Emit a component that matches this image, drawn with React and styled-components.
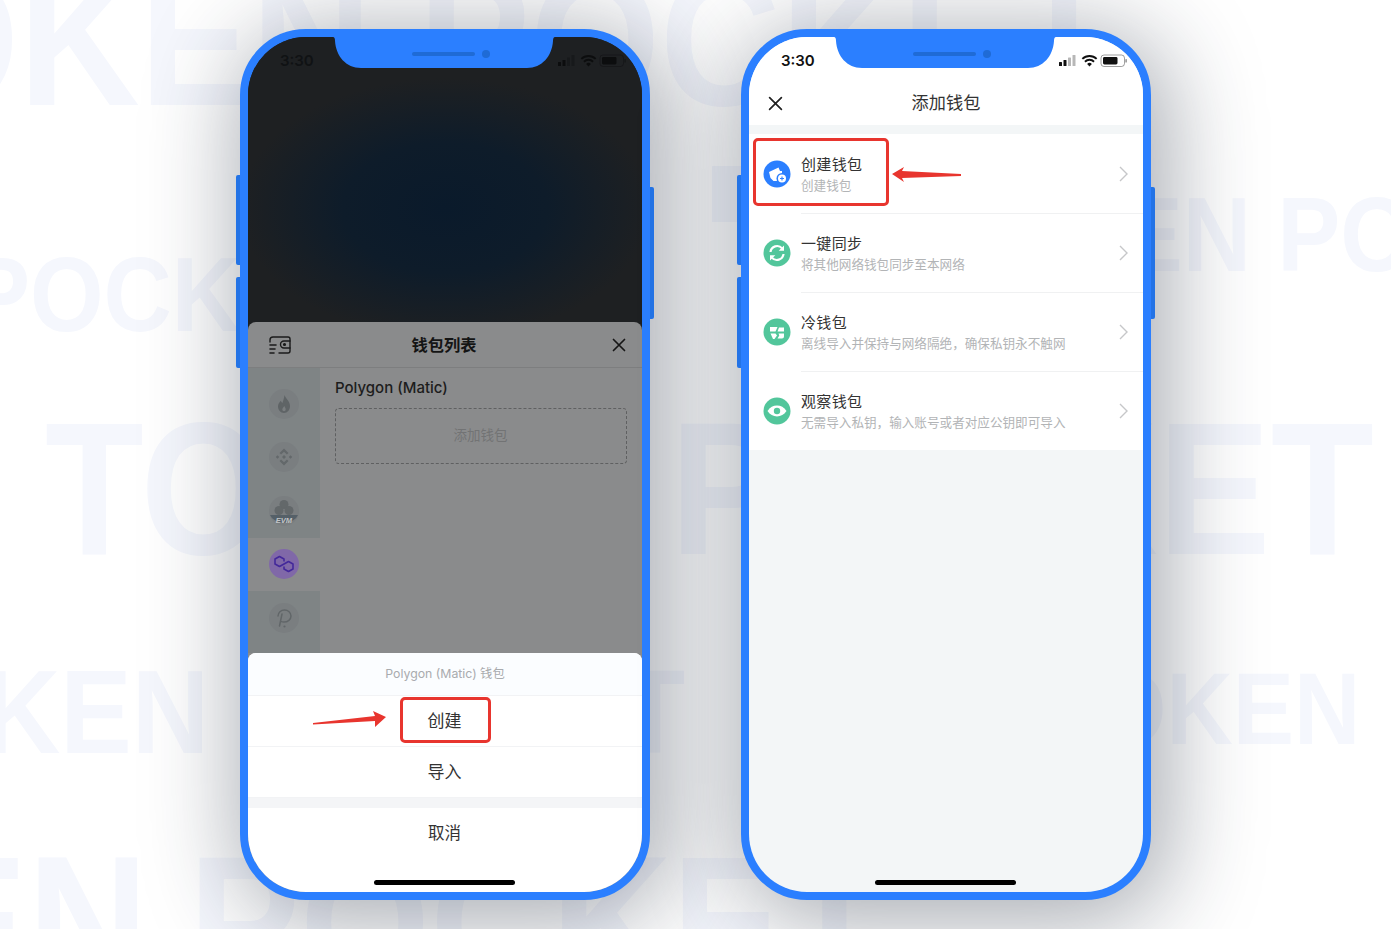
import React from "react";
import styled, { createGlobalStyle } from "styled-components";

const Global = createGlobalStyle`
  html, body { margin: 0; padding: 0; background: #fff; }
  body { font-family: Inter, "Noto Sans CJK SC", sans-serif; }
`;

const Stage = styled.div`
  position: relative; width: 1391px; height: 929px; overflow: hidden; background: #fff;
  display: flex; justify-content: center; align-items: flex-start; gap: 91px; padding-top: 29px; box-sizing: border-box;
`;
const Mark = styled.div`
  position: absolute; top: ${p => p.$top}px; left: ${p => p.$left}px;
  font: 700 ${p => p.$size}px/1 "Liberation Sans", sans-serif; color: #f5f7fd;
  white-space: nowrap; transform: scaleX(${p => p.$sx || 0.9}); transform-origin: 0 0; word-spacing: ${p => p.$ws || 0}px;
`;
const MarkBlock = styled.span`
  position: absolute; left: 712px; top: 166px; width: 40px; height: 56px; background: #f5f7fd;
`;
const Phone = styled.div`
  position: relative; width: 410px; height: 871px; box-sizing: border-box; border: 8px solid #2b7fff; border-radius: 66px;
  background: #2b7fff; box-shadow: 8px 12px 95px 8px rgba(30,40,58,.4); flex: none;
`;
const SideKey = styled.span`
  position: absolute; top: ${p => p.$top}px; height: ${p => p.$h}px; width: 4px; background: #2373e6;
  ${p => p.$right ? "right: -12px; border-radius: 0 2px 2px 0;" : "left: -12px; border-radius: 2px 0 0 2px;"}
`;
const Screen = styled.div`
  position: relative; height: 100%; border-radius: 58px; overflow: hidden; display: flex; flex-direction: column;
  background: ${p => p.$bg};
`;
const NotchWrap = styled.div`
  position: absolute; top: 0; left: 85px; width: 222px; height: 32px; z-index: 3;
`;
const StatusRow = styled.div`
  position: absolute; top: 0; left: 0; right: 0; height: 47px; z-index: 2; display: flex; justify-content: space-between; align-items: center;
  padding: 0 16px 0 32px; color: ${p => p.$c};
`;
const Clock = styled.span`
  font: 600 15px/1 Inter, sans-serif;
`;
const Backdrop = styled.div`
  height: 285px; flex: none;
  background: radial-gradient(ellipse 205px 130px at 50% 60%, #0a1a2b 0%, #0e1c2a 50%, #1e2022 100%);
`;
const WalletSheet = styled.section`
  height: 331px; flex: none; border-radius: 8px 8px 0 0; background: #8a8b8c; display: flex; flex-direction: column;
`;
const SheetHead = styled.header`
  height: 45px; flex: none; box-sizing: content-box; display: grid; grid-template-columns: 1fr auto 1fr; align-items: center; padding: 0 16px 0 14px; border-bottom: 1px solid #7d7e7f;
  & > :first-child { margin-left: 6px; }
  & > :last-child { justify-self: end; }
`;
const SheetTitle = styled.h2`
  margin: 0; font: 700 16.3px/1 "Noto Sans CJK SC", sans-serif; color: #141414;
`;
const SheetBody = styled.div`
  flex: 1; display: flex; min-height: 0;
`;
const Chains = styled.nav`
  width: 72px; background: #7f8485; display: flex; flex-direction: column; flex: none; padding-top: 9px;
`;
const Chain = styled.div`
  height: 53.5px; flex: none; display: flex; align-items: center; justify-content: center;
  background: ${p => p.$on ? "#8a8b8c" : "transparent"};
`;
const WalletPane = styled.div`
  flex: 1; padding: 10px 15px 0; display: flex; flex-direction: column; align-items: stretch;
`;
const PaneLabel = styled.div`
  font: 500 15px/19px Inter, sans-serif; color: #1d1d1d; margin-bottom: 11px;
`;
const AddBox = styled.div`
  height: 52px; border: 1px dashed #5f6061; border-radius: 4px; display: flex; align-items: center; justify-content: center; padding: 0 1px 2px 0;
  font: 400 13.5px/1 "Noto Sans CJK SC", sans-serif; color: #727374;
`;
const ActionSheet = styled.section`
  flex: 1; border-radius: 8px 8px 0 0; overflow: hidden; background: #fff; display: flex; flex-direction: column; position: relative;
`;
const ActionTitle = styled.div`
  height: 42px; flex: none; background: #fbfdff; border-bottom: 1px solid #f2f3f5; display: flex; align-items: center; justify-content: center;
  font: 400 12.3px/1 Inter, "Noto Sans CJK SC", sans-serif; color: #a9abae;
`;
const ActionRow = styled.div`
  height: 51px; flex: none; display: flex; align-items: center; justify-content: center; box-sizing: border-box; padding: 0 1px 3px 0;
  border-bottom: 1px solid #f2f3f5;
  font: 400 17px/1 "Noto Sans CJK SC", sans-serif; color: #333;
`;
const Gap = styled.div`
  height: 10px; flex: none; background: #f4f5f7;
`;
const CancelRow = styled.div`
  flex: 1; display: flex; justify-content: center; padding: 16px 1px 0 0; font: 400 16.5px/1 "Noto Sans CJK SC", sans-serif; color: #333;
`;
const HomeBar = styled.span`
  position: absolute; left: 126px; bottom: 7px; width: 141px; height: 5px; border-radius: 3px; background: #000; z-index: 4;
`;
const RedBox = styled.div`
  position: absolute; left: ${p => p.$l}px; top: ${p => p.$t}px; width: ${p => p.$w}px; height: ${p => p.$h}px; box-sizing: border-box;
  border: 3px solid #e8352e; border-radius: 5px; z-index: 5;
`;
const ArrowBox = styled.svg`
  position: absolute; left: ${p => p.$l}px; top: ${p => p.$t}px; z-index: 5; overflow: visible;
`;
const NavBar = styled.header`
  height: 88px; flex: none; background: #fff; display: flex; align-items: center; justify-content: center; position: relative; padding-top: 42px; box-sizing: border-box;
`;
const NavTitle = styled.h1`
  margin: 0; font: 400 17.2px/1 "Noto Sans CJK SC", sans-serif; color: #333;
`;
const NavClose = styled.span`
  position: absolute; left: 19px; top: 59px; display: flex;
`;
const MenuList = styled.div`
  margin-top: 9px; background: #fff; display: flex; flex-direction: column;
`;
const MenuRow = styled.div`
  height: 79px; box-sizing: border-box; flex: none; display: flex; align-items: center; position: relative; padding: 0 15px 0 14px; gap: 10px;
  &:after { content: ""; position: absolute; left: 52px; right: 0; bottom: -1px; height: 1px; background: #f0f1f2; z-index: 1; }
  &:last-child:after { display: none; }
`;
const MenuIcon = styled.span`
  width: 28px; height: 28px; flex: none; display: flex; margin-top: 1px;
`;
const MenuText = styled.div`
  flex: 1; display: flex; flex-direction: column; gap: 3px;
`;
const MenuName = styled.div`
  font: 400 15px/20px "Noto Sans CJK SC", sans-serif; color: #333; letter-spacing: .35px;
`;
const MenuSub = styled.div`
  font: 400 12.6px/16px "Noto Sans CJK SC", sans-serif; color: #b2b4b6;
`;

const Notch = () => (
  <NotchWrap>
    <svg width="222" height="32" viewBox="0 0 222 32">
      <path d="M0 0Q2 0 2 4C3 19 13 31 28 31H194C209 31 219 19 220 4Q220 0 222 0Z" fill="#2b7fff" />
      <rect x="79" y="15" width="63" height="4" rx="2" fill="#1f6bd6" />
      <circle cx="153" cy="17" r="4" fill="#1f6bd6" />
    </svg>
  </NotchWrap>
);

const StatusIcons = ({ c, dim }) => (
  <svg width="70" height="14" viewBox="0 0 70 14">
    <g fill={c}>
      <rect x="2" y="8" width="3" height="4" rx=".6" />
      <rect x="6.500" y="6" width="3" height="6" rx=".6" />
      <rect x="11" y="3.500" width="3" height="8.500" rx=".6" opacity={dim} />
      <rect x="15.500" y="1" width="3" height="11" rx=".6" opacity={dim} />
      <path transform="translate(2 0)" d="M30.500 12.500l-2.400-2.600a3.400 3.400 0 0 1 4.800 0zM26.600 8.400l-1.300-1.400a7.400 7.400 0 0 1 10.400 0l-1.300 1.400a5.600 5.600 0 0 0-7.800 0zM24 5.600L22.700 4.200a11 11 0 0 1 15.600 0L37 5.600a9.200 9.200 0 0 0-13 0z" />
      <rect x="44" y="1" width="23.500" height="11.500" rx="3" fill="none" stroke={c} strokeOpacity=".4" />
      <rect x="46" y="3" width="14.500" height="7.500" rx="1.400" />
      <rect x="68.400" y="5" width="1.400" height="3.600" rx=".7" opacity=".5" />
    </g>
  </svg>
);

const Chip = ({ children, bg = "#7a7e80" }) => (
  <svg width="30" height="30" viewBox="0 0 30 30">
    <circle cx="15" cy="15" r="15" fill={bg} />
    {children}
  </svg>
);

const WalletGlyph = () => (
  <svg width="24" height="20" viewBox="0 0 24 20" fill="none" stroke="#1b1b1b" strokeWidth="1.400" strokeLinecap="round">
    <path d="M2 7V5a3 3 0 0 1 3-3h15a2 2 0 0 1 2 2v12a2 2 0 0 1-2 2h-9" />
    <path d="M22 6h-6a3.500 3.500 0 0 0 0 7h6" />
    <circle cx="16.500" cy="9.500" r=".9" fill="#1b1b1b" />
    <path d="M2 10h6M2 14h5M2 18h4" strokeWidth="1.600" />
  </svg>
);

const Cross = ({ size = 14, c = "#161616", w = 1.7 }) => (
  <svg width={size} height={size} viewBox="0 0 14 14" stroke={c} strokeWidth={w} strokeLinecap="round">
    <path d="M1.500 1.500l11 11M12.500 1.500l-11 11" />
  </svg>
);

const Chevron = () => (
  <svg width="9" height="16" viewBox="0 0 9 16" fill="none" stroke="#c6c7c9" strokeWidth="1.400">
    <path d="M1 1l7 7-7 7" />
  </svg>
);

const Round = ({ bg, children }) => (
  <svg width="28" height="28" viewBox="0 0 28 28">
    <circle cx="14" cy="14" r="13.500" fill={bg} />
    {children}
  </svg>
);

const menu = [
  {
    name: "创建钱包", sub: "创建钱包", icon: (
      <Round bg="#2b7fff">
        <path d="M6 12L15.500 7.500 17 11h2v10H10.500L7.500 18z" fill="#fff" />
        <circle cx="19" cy="18.500" r="5.500" fill="#2b7fff" />
        <circle cx="19" cy="18.500" r="4" fill="#fff" />
        <path d="M19 16.500v4M17 18.500h4" stroke="#2b7fff" strokeWidth="1.100" />
      </Round>
    )
  },
  {
    name: "一键同步", sub: "将其他网络钱包同步至本网络", icon: (
      <Round bg="#52c69b">
        <g fill="none" stroke="#fff" strokeWidth="2.200">
          <path d="M7.500 13a6.600 6.600 0 0 1 11.600-3.600" />
          <path d="M20.500 15a6.600 6.600 0 0 1-11.600 3.600" />
        </g>
        <path d="M21 6.500v5.300h-5.300zM7 21.500v-5.300h5.300z" fill="#fff" />
      </Round>
    )
  },
  {
    name: "冷钱包", sub: "离线导入并保持与网络隔绝，确保私钥永不触网", icon: (
      <Round bg="#52c69b">
        <path d="M7 9h7.500l-2 4.500L7 13.500z" fill="#fff" />
        <path d="M16 9.500h5v4h-6.500z" fill="#fff" />
        <path d="M7.500 15.500h5l1.500 2-2.500 3.500H10z" fill="#fff" />
        <path d="M15.500 15.500H21v3a2 2 0 0 1-2 2h-4.500l1.800-3z" fill="#fff" />
      </Round>
    )
  },
  {
    name: "观察钱包", sub: "无需导入私钥，输入账号或者对应公钥即可导入", icon: (
      <Round bg="#52c69b">
        <path d="M4.500 14C7 10.300 10.200 8.600 14 8.600S21 10.300 23.500 14C21 17.700 17.800 19.400 14 19.400S7 17.700 4.500 14z" fill="#fff" />
        <circle cx="14" cy="14" r="3.200" fill="#52c69b" />
      </Round>
    )
  },
];

export default function App() {
  return (
    <Stage>
      <Global />
      <Mark $top={-56} $left={-111} $size={190} $sx={0.88}>OKEN POCKET</Mark>
      <Mark $top={242} $left={-33} $size={105}>POCKET</Mark>
      <Mark $top={182} $left={922} $size={105}>TOKEN POCKET</Mark>
      <MarkBlock />
      <Mark $top={393} $left={45} $size={190} $sx={0.85}>TO</Mark>
      <Mark $top={393} $left={670} $size={190} $sx={0.889}>POCKET</Mark>
      <Mark $top={652} $left={-17} $size={119}>KEN POCKET</Mark>
      <Mark $top={658} $left={1095} $size={102}>OKEN POCKET</Mark>
      <Mark $top={827} $left={-84} $size={190} $sx={0.88} $ws={-7}>EN POCKET</Mark>

      <Phone>
        <SideKey $top={138} $h={90} />
        <SideKey $top={240} $h={91} />
        <SideKey $right $top={150} $h={132} />
        <Screen $bg="linear-gradient(#1e2022 0 300px, #8a8b8c 300px)">
          <Notch />
          <StatusRow $c="#101214">
            <Clock>3:30</Clock>
            <StatusIcons c="#0c0d0e" dim=".35" />
          </StatusRow>
          <Backdrop />
          <WalletSheet>
            <SheetHead>
              <WalletGlyph />
              <SheetTitle>钱包列表</SheetTitle>
              <Cross />
            </SheetHead>
            <SheetBody>
              <Chains>
                <Chain>
                  <Chip>
                    <path d="M15.500 6c1 3.500 5.500 6 5.500 11 0 3.800-2.600 7-6 7s-6-3-6-6.500c0-2.700 1.400-4.200 2.800-5.800.6 1.100.9 1.700 1.600 2.300C14.400 11.500 15 9 15.500 6z" fill="#5f6466" />
                    <path d="M15.200 17c.6 1.200 1.500 2.200 1.500 3.500a1.700 1.700 0 0 1-3.400 0c0-1.200 1.300-2.200 1.900-3.500z" fill="#7a7e80" />
                  </Chip>
                </Chain>
                <Chain>
                  <Chip>
                    <g fill="#63686a">
                      <path d="M15 6.500l4.500 4.500-1.600 1.600L15 9.700l-2.900 2.900L10.500 11z" />
                      <path d="M15 23.500L10.500 19l1.600-1.600 2.900 2.900 2.900-2.900 1.600 1.600z" />
                      <path d="M8.500 13.300L10.200 15l-1.700 1.700L6.800 15zM21.500 13.300L23.200 15l-1.700 1.700L19.800 15zM15 13l2 2-2 2-2-2z" />
                    </g>
                  </Chip>
                </Chain>
                <Chain>
                  <Chip>
                    <g fill="#63686a">
                      <circle cx="15" cy="8.500" r="4.500" />
                      <circle cx="10" cy="14.500" r="4.500" />
                      <circle cx="20" cy="14.500" r="4.500" />
                    </g>
                    <path d="M1 19h28a14.500 10.500 0 0 1-28 0z" fill="#556068" />
                    <text x="15" y="27" textAnchor="middle" fontFamily="Liberation Sans" fontWeight="700" fontStyle="italic" fontSize="7.500" fill="#c2c5c7">EVM</text>
                  </Chip>
                </Chain>
                <Chain $on>
                  <Chip bg="#8068a8">
                    <path d="M15 12.500V10L10.500 7.500 6 10v5l4.500 2.500 9-5L24 15v5l-4.500 2.500L15 20v-2.500" fill="none" stroke="#43289a" strokeWidth="1.600" strokeLinejoin="round" />
                  </Chip>
                </Chain>
                <Chain>
                  <Chip>
                    <path d="M10.500 23l2.500-12M9 13C9 9.500 12 7 15.500 7S22 9.500 22 13c0 3.500-3.200 6-7 6-1 0-2.300-.2-3.200-.6" fill="none" stroke="#616668" strokeWidth="1.500" strokeLinecap="round" />
                    <circle cx="15.500" cy="23.500" r="1.100" fill="#616668" />
                  </Chip>
                </Chain>
              </Chains>
              <WalletPane>
                <PaneLabel>Polygon (Matic)</PaneLabel>
                <AddBox>添加钱包</AddBox>
              </WalletPane>
            </SheetBody>
          </WalletSheet>
          <ActionSheet>
            <ActionTitle>Polygon (Matic) 钱包</ActionTitle>
            <ActionRow>创建</ActionRow>
            <ActionRow>导入</ActionRow>
            <Gap />
            <CancelRow>取消</CancelRow>
          </ActionSheet>
          <HomeBar />
          <RedBox $l={152} $t={660} $w={91} $h={46} />
          <ArrowBox $l={65} $t={674} width="73" height="16" viewBox="0 0 73 16">
            <path d="M0 12L62 5 60 0 73 6 62 16 62 10 0 13.500z" fill="#e8352e" />
          </ArrowBox>
        </Screen>
      </Phone>

      <Phone>
        <SideKey $top={138} $h={90} />
        <SideKey $top={240} $h={91} />
        <SideKey $right $top={150} $h={132} />
        <Screen $bg="#f3f6f7">
          <Notch />
          <StatusRow $c="#111">
            <Clock>3:30</Clock>
            <StatusIcons c="#111" dim=".3" />
          </StatusRow>
          <NavBar>
            <NavClose><Cross size={15} c="#222" w={1.6} /></NavClose>
            <NavTitle>添加钱包</NavTitle>
          </NavBar>
          <MenuList>
            {menu.map(m => (
              <MenuRow key={m.name}>
                <MenuIcon>{m.icon}</MenuIcon>
                <MenuText>
                  <MenuName>{m.name}</MenuName>
                  <MenuSub>{m.sub}</MenuSub>
                </MenuText>
                <Chevron />
              </MenuRow>
            ))}
          </MenuList>
          <HomeBar />
          <RedBox $l={4} $t={101} $w={136} $h={68} />
          <ArrowBox $l={143} $t={130} width="69" height="15" viewBox="0 0 69 15">
            <path d="M0 7L12 0 10 4 69 7 69 9 10 11 12 15z" fill="#e8352e" />
          </ArrowBox>
        </Screen>
      </Phone>
    </Stage>
  );
}
